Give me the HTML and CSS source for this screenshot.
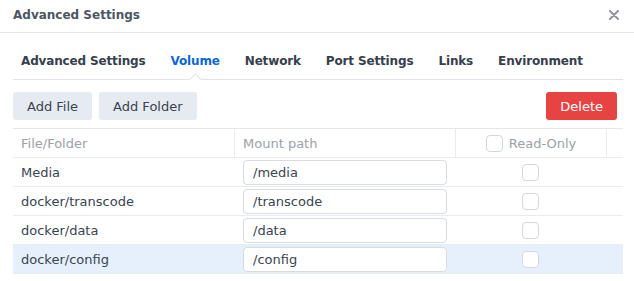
FILE: index.html
```html
<!DOCTYPE html>
<html lang="en">
<head>
    <meta charset="UTF-8">
    <meta name="viewport" content="width=device-width, initial-scale=1.0">
    <title>Advanced Settings</title>
    <link rel="stylesheet" href="styles.css">
</head>
<body>
    <div class="dialog">
        <div class="header">
            <span class="title">Advanced Settings</span>
            <svg class="close" width="10" height="10" viewBox="0 0 10 10">
                <path d="M1 1 L9 9 M9 1 L1 9" stroke="#8e949b" stroke-width="2" stroke-linecap="round"/>
            </svg>
        </div>

        <div class="tabs">
            <span class="tab">Advanced Settings</span>
            <span class="tab active">Volume</span>
            <span class="tab">Network</span>
            <span class="tab">Port Settings</span>
            <span class="tab">Links</span>
            <span class="tab">Environment</span>
        </div>

        <div class="toolbar">
            <button class="btn">Add File</button>
            <button class="btn">Add Folder</button>
            <button class="btn btn-danger">Delete</button>
        </div>

        <div class="grid">
            <div class="row head">
                <div class="cell">File/Folder</div>
                <div class="cell">Mount path</div>
                <div class="cell center"><span class="check"></span>Read-Only</div>
                <div class="cell"></div>
            </div>
            <div class="row">
                <div class="cell">Media</div>
                <div class="cell"><input class="field" type="text" value="/media"></div>
                <div class="cell center"><span class="check"></span></div>
                <div class="cell"></div>
            </div>
            <div class="row">
                <div class="cell">docker/transcode</div>
                <div class="cell"><input class="field" type="text" value="/transcode"></div>
                <div class="cell center"><span class="check"></span></div>
                <div class="cell"></div>
            </div>
            <div class="row">
                <div class="cell">docker/data</div>
                <div class="cell"><input class="field" type="text" value="/data"></div>
                <div class="cell center"><span class="check"></span></div>
                <div class="cell"></div>
            </div>
            <div class="row selected">
                <div class="cell">docker/config</div>
                <div class="cell"><input class="field" type="text" value="/config"></div>
                <div class="cell center"><span class="check"></span></div>
                <div class="cell"></div>
            </div>
        </div>
    </div>
</body>
</html>
```

FILE: styles.css
```css
/* Загальні стилі */
body {
    margin: 0;
    padding: 0;
    background: #ffffff;
    font-family: 'DejaVu Sans', Verdana, sans-serif;
    font-size: 13px;
    color: #3a4350;
}

.dialog {
    width: 634px;
}

.header {
    height: 33px;
    display: flex;
    align-items: center;
    justify-content: space-between;
    padding: 0 15px 3px 13px;
    box-sizing: border-box;
    border-bottom: 1px solid #e3e7eb;
}

.title {
    font-weight: bold;
    font-size: 12px;
    color: #4c5663;
}

.tabs {
    position: relative;
    height: 46px;
    display: flex;
    align-items: flex-end;
    gap: 25px;
    margin: 0 11px 0 13px;
    padding-left: 8px;
    border-bottom: 1px solid #dfe4ea;
}

.tab {
    position: relative;
    font-weight: bold;
    font-size: 12px;
    line-height: 16px;
    letter-spacing: -0.15px;
    white-space: nowrap;
    padding-bottom: 10px;
    color: #36404c;
}

.tab.active {
    color: #0a68d3;
}

.tab.active::after {
    content: '';
    position: absolute;
    left: 50%;
    bottom: -5px;
    width: 8px;
    height: 8px;
    margin-left: -4px;
    background: #ffffff;
    border-top: 1px solid #dfe4ea;
    border-left: 1px solid #dfe4ea;
    transform: rotate(45deg);
}

.toolbar {
    display: flex;
    gap: 7px;
    margin: 12px 17px 0 13px;
}

.btn {
    font-family: inherit;
    font-size: 13px;
    height: 28px;
    padding: 0 14px;
    border: none;
    border-radius: 3px;
    background: #e6ebf1;
    color: #3a4350;
    cursor: pointer;
}

.btn-danger {
    margin-left: auto;
    background: #e84343;
    color: #ffffff;
}

.grid {
    margin: 8px 11px 0 13px;
    border-top: 1px solid #e3e7eb;
}

.row {
    display: grid;
    grid-template-columns: 221px 221px 151px 17px;
    height: 29px;
    border-bottom: 1px solid #e8ebef;
    box-sizing: border-box;
}

.cell {
    display: flex;
    align-items: center;
    padding: 1px 8px 0;
}

.cell.center {
    justify-content: center;
    padding: 0;
}

.head {
    color: #9ba1a8;
}

.head .cell + .cell {
    border-left: 1px solid #e8ebef;
}

.head .check {
    margin-right: 6px;
}

.row.selected {
    background: #e5f0fc;
}

.field {
    width: 205px;
    height: 25px;
    box-sizing: border-box;
    margin-left: 1px;
    padding: 0 9px;
    border: 1px solid #d6dce2;
    border-radius: 4px;
    font-family: inherit;
    font-size: 13px;
    color: #3a4350;
    background: #ffffff;
}

.check {
    width: 17px;
    height: 17px;
    box-sizing: border-box;
    border: 1px solid #d3d8de;
    border-radius: 4px;
    background: #ffffff;
}
```
